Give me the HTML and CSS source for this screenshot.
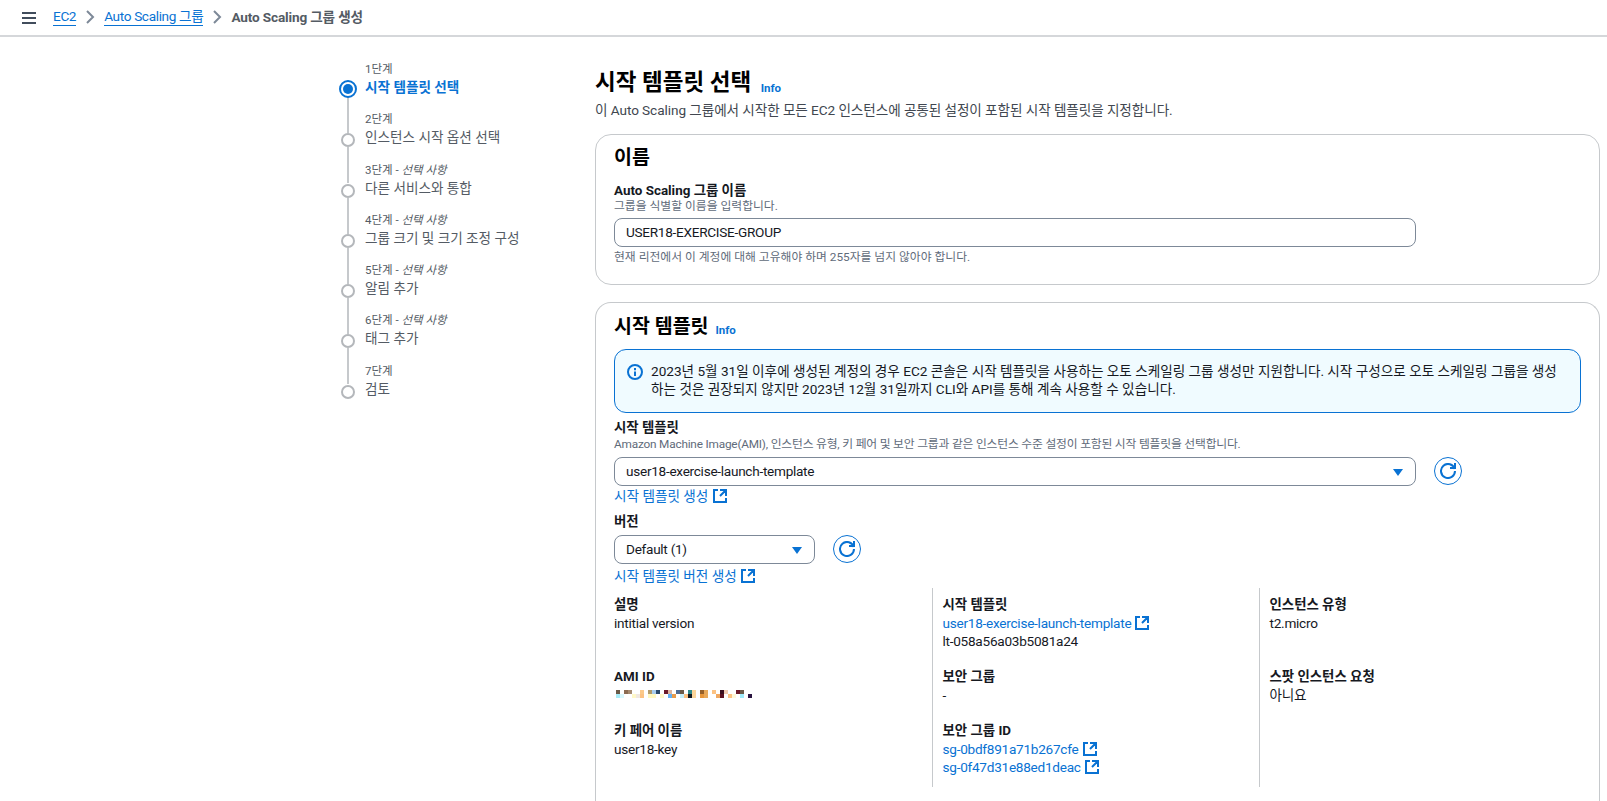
FILE: index.html
```html
<!DOCTYPE html>
<html lang="ko">
<head>
<meta charset="utf-8">
<title>Auto Scaling 그룹 생성</title>
<link rel="stylesheet" href="styles.css">
</head>
<body>
<svg class="sprite" width="0" height="0" aria-hidden="true">
  <symbol id="ext" viewBox="0 0 16 16"><path d="M14 8.01v-6H8M14.02 2 8 8.01M6 2.01H2v12h12v-3.99" fill="none" stroke="currentColor" stroke-width="2"/></symbol>
  <symbol id="refresh" viewBox="0 0 16 16"><path d="M10 5h5V0M15 8a7 7 0 1 1-.29-2" fill="none" stroke="currentColor" stroke-width="2"/></symbol>
</svg>
<header class="topbar">
  <svg class="menu" width="14" height="12" viewBox="0 0 14 12"><path d="M0 1h14M0 6h14M0 11h14" stroke="#414d5c" stroke-width="2"/></svg>
  <nav class="crumbs">
    <a class="crumb">EC2</a>
    <svg class="chev" width="9" height="14" viewBox="0 0 9 14"><path d="M1 1l6 6-6 6" fill="none" stroke="#7d8998" stroke-width="2"/></svg>
    <a class="crumb">Auto Scaling 그룹</a>
    <svg class="chev" width="9" height="14" viewBox="0 0 9 14"><path d="M1 1l6 6-6 6" fill="none" stroke="#7d8998" stroke-width="2"/></svg>
    <span class="crumb-current">Auto Scaling 그룹 생성</span>
  </nav>
</header>
<div class="layout">
  <ol class="steps">
    <li class="step active"><small>1단계</small><span class="marker"></span><b>시작 템플릿 선택</b></li>
    <li class="step"><small>2단계</small><span class="marker"></span><span>인스턴스 시작 옵션 선택</span></li>
    <li class="step"><small>3단계 - <i>선택 사항</i></small><span class="marker"></span><span>다른 서비스와 통합</span></li>
    <li class="step"><small>4단계 - <i>선택 사항</i></small><span class="marker"></span><span>그룹 크기 및 크기 조정 구성</span></li>
    <li class="step"><small>5단계 - <i>선택 사항</i></small><span class="marker"></span><span>알림 추가</span></li>
    <li class="step"><small>6단계 - <i>선택 사항</i></small><span class="marker"></span><span>태그 추가</span></li>
    <li class="step last"><small>7단계</small><span class="marker"></span><span>검토</span></li>
  </ol>
  <main class="content">
    <h1 class="page-title">시작 템플릿 선택 <a class="info">Info</a></h1>
    <p class="page-desc">이 Auto Scaling 그룹에서 시작한 모든 EC2 인스턴스에 공통된 설정이 포함된 시작 템플릿을 지정합니다.</p>
    <section class="card">
      <h2 class="card-title">이름</h2>
      <div class="label">Auto Scaling 그룹 이름</div>
      <div class="hint">그룹을 식별할 이름을 입력합니다.</div>
      <div class="field wide">USER18-EXERCISE-GROUP</div>
      <div class="hint after">현재 리전에서 이 계정에 대해 고유해야 하며 255자를 넘지 않아야 합니다.</div>
    </section>
    <section class="card open">
      <h2 class="card-title">시작 템플릿 <a class="info">Info</a></h2>
      <div class="alert">
        <svg class="alert-icon" width="16" height="16" viewBox="0 0 16 16"><circle cx="8" cy="8" r="7" fill="none" stroke="#0972d3" stroke-width="2"/><path d="M8 12V7.5M8 6.2V4" stroke="#0972d3" stroke-width="2"/></svg>
        <p>2023년 5월 31일 이후에 생성된 계정의 경우 EC2 콘솔은 시작 템플릿을 사용하는 오토 스케일링 그룹 생성만 지원합니다. 시작 구성으로 오토 스케일링 그룹을 생성<br>하는 것은 권장되지 않지만 2023년 12월 31일까지 CLI와 API를 통해 계속 사용할 수 있습니다.</p>
      </div>
      <div class="label">시작 템플릿</div>
      <div class="hint long">Amazon Machine Image(AMI), 인스턴스 유형, 키 페어 및 보안 그룹과 같은 인스턴스 수준 설정이 포함된 시작 템플릿을 선택합니다.</div>
      <div class="select-row">
        <div class="field wide select">user18-exercise-launch-template<span class="caret"></span></div>
        <button class="refresh"><svg width="16" height="16"><use href="#refresh"/></svg></button>
      </div>
      <a class="link-line">시작 템플릿 생성 <svg class="ext" width="16" height="16"><use href="#ext"/></svg></a>
      <div class="label version">버전</div>
      <div class="select-row version-row">
        <div class="field narrow select">Default (1)<span class="caret"></span></div>
        <button class="refresh"><svg width="16" height="16"><use href="#refresh"/></svg></button>
      </div>
      <a class="link-line">시작 템플릿 버전 생성 <svg class="ext" width="16" height="16"><use href="#ext"/></svg></a>
      <div class="details">
        <div class="col">
          <dl class="item tall"><dt>설명</dt><dd>intitial version</dd></dl>
          <dl class="item"><dt>AMI ID</dt><dd><svg class="mosaic" width="136" height="8" viewBox="0 0 34 2" shape-rendering="crispEdges">
            <rect x="0" y="0" width="1" height="1" fill="#6b5a48"/><rect x="2" y="0" width="1" height="1" fill="#8b6b52"/><rect x="3" y="0" width="1" height="1" fill="#a58a70"/><rect x="6" y="0" width="1" height="1" fill="#fbc98a"/><rect x="8" y="0" width="1" height="1" fill="#b09a6b"/><rect x="9" y="0" width="1" height="1" fill="#a8cdf0"/><rect x="10" y="0" width="1" height="1" fill="#2b4a6b"/><rect x="12" y="0" width="1" height="1" fill="#6b1a2a"/><rect x="13" y="0" width="1" height="1" fill="#dcb4a0"/><rect x="15" y="0" width="1" height="1" fill="#4f6a90"/><rect x="16" y="0" width="1" height="1" fill="#6b5a48"/><rect x="18" y="0" width="1" height="1" fill="#2f8a8a"/><rect x="19" y="0" width="1" height="1" fill="#fcd59a"/><rect x="21" y="0" width="1" height="1" fill="#96602a"/><rect x="22" y="0" width="1" height="1" fill="#e8a95a"/><rect x="24" y="0" width="1" height="1" fill="#fcc282"/><rect x="26" y="0" width="1" height="1" fill="#3a0f1f"/><rect x="27" y="0" width="1" height="1" fill="#f0c8b0"/><rect x="30" y="0" width="1" height="1" fill="#6b1a2a"/><rect x="31" y="0" width="1" height="1" fill="#6b5a48"/>
            <rect x="0" y="1" width="1" height="1" fill="#a8ecf8"/><rect x="1" y="1" width="1" height="1" fill="#d8f8ff"/><rect x="4" y="1" width="1" height="1" fill="#fff8c8"/><rect x="5" y="1" width="1" height="1" fill="#f0e8e0"/><rect x="6" y="1" width="1" height="1" fill="#fcc282"/><rect x="8" y="1" width="2" height="1" fill="#fff8c0"/><rect x="11" y="1" width="1" height="1" fill="#fff8c8"/><rect x="13" y="1" width="1" height="1" fill="#62b0f5"/><rect x="14" y="1" width="1" height="1" fill="#e89a4a"/><rect x="16" y="1" width="1" height="1" fill="#c8f0fa"/><rect x="17" y="1" width="1" height="1" fill="#fcc282"/><rect x="18" y="1" width="1" height="1" fill="#101820"/><rect x="19" y="1" width="1" height="1" fill="#fcd59a"/><rect x="21" y="1" width="1" height="1" fill="#e8963a"/><rect x="22" y="1" width="1" height="1" fill="#e8a95a"/><rect x="25" y="1" width="1" height="1" fill="#f0a860"/><rect x="26" y="1" width="1" height="1" fill="#5a1020"/><rect x="28" y="1" width="1" height="1" fill="#fcc282"/><rect x="29" y="1" width="1" height="1" fill="#fff8d8"/><rect x="31" y="1" width="1" height="1" fill="#a0ecfa"/><rect x="33" y="1" width="1" height="1" fill="#2a1440"/>
          </svg></dd></dl>
          <dl class="item"><dt>키 페어 이름</dt><dd>user18-key</dd></dl>
        </div>
        <div class="col">
          <dl class="item tall"><dt>시작 템플릿</dt><dd><a>user18-exercise-launch-template <svg class="ext" width="16" height="16"><use href="#ext"/></svg></a></dd><dd>lt-058a56a03b5081a24</dd></dl>
          <dl class="item"><dt>보안 그룹</dt><dd>-</dd></dl>
          <dl class="item"><dt>보안 그룹 ID</dt><dd><a>sg-0bdf891a71b267cfe <svg class="ext" width="16" height="16"><use href="#ext"/></svg></a></dd><dd><a>sg-0f47d31e88ed1deac <svg class="ext" width="16" height="16"><use href="#ext"/></svg></a></dd></dl>
        </div>
        <div class="col">
          <dl class="item tall"><dt>인스턴스 유형</dt><dd>t2.micro</dd></dl>
          <dl class="item"><dt>스팟 인스턴스 요청</dt><dd>아니요</dd></dl>
        </div>
      </div>
    </section>
  </main>
</div>
</body>
</html>
```
FILE: styles.css
```css
* { box-sizing: border-box; }
html, body { margin: 0; height: 801px; overflow: hidden; background: #fff; }
body { font-family: Roboto, "Noto Sans CJK KR", sans-serif; font-size: 13.6px; line-height: 18px; color: #16191f; }
.sprite { position: absolute; }
a { color: #0972d3; }
.topbar { height: 37px; border-bottom: 2px solid #d5d7da; display: flex; align-items: center; padding: 0 0 2px 22px; }
.menu { margin-right: 17px; margin-top: 2px; }
.crumbs { display: flex; align-items: center; gap: 9.5px; font-size: 13.6px; }
.crumb { color: #0972d3; border-bottom: 1px solid #0972d3; line-height: 17px; letter-spacing: -0.35px; }
.crumb-current { font-weight: 700; color: #545b64; letter-spacing: -0.15px; }
.layout { display: flex; padding: 24px 7px 0 341px; }
.steps { list-style: none; margin: 0; padding: 0; width: 254px; flex: none; }
.step { position: relative; height: 50.3px; padding-left: 24px; color: #545b64; display: flex; flex-direction: column; }
.step small { font-size: 11.5px; line-height: 16px; }
.step > span:last-child, .step > b { line-height: 21px; font-size: 13.6px; }
.step.active > b { color: #0972d3; font-weight: 700; }
.marker { position: absolute; left: 0; top: 22px; width: 14px; height: 14px; border: 2px solid #b4b7bb; border-radius: 50%; background: #fff; z-index: 1; }
.step.active .marker { left: -2px; top: 19px; width: 18px; height: 18px; border-color: #0972d3; }
.step.active .marker::after { content: ""; position: absolute; inset: 2px; background: #0972d3; border-radius: 50%; }
.step::before { content: ""; position: absolute; left: 6px; top: 36px; height: 36px; width: 2px; background: #c6c9cc; }
.step.last::before { display: none; }
.content { flex: 1; min-width: 0; }
.page-title { margin: 0; padding-top: 8px; font-size: 22.5px; line-height: 26px; font-weight: 700; color: #000; }
.info { font-size: 11.5px; font-weight: 700; vertical-align: -2px; margin-left: 2px; }
.page-title .info { margin-left: 4px; }
.page-desc { margin: 0 0 15px; color: #414750; letter-spacing: -0.07px; }
.card { border: 1px solid #c6c9cc; border-radius: 16px; padding: 10px 18px 20px; margin-bottom: 17px; }
.card.open { border-bottom: none; border-radius: 16px 16px 0 0; height: 499px; margin-bottom: 0; padding: 11px 18px 0; }
.card-title { margin: 0 0 12px; font-size: 19.5px; line-height: 26px; font-weight: 700; color: #000; }
.card-title .info { vertical-align: -1px; }
.card.open .card-title { margin-bottom: 6px; }
.label { font-weight: 700; font-size: 13.4px; line-height: 16px; color: #16191f; }
.hint { font-size: 11.8px; line-height: 14px; color: #5f6b7a; }
.hint.long { letter-spacing: -0.19px; margin-top: 1px; }
.hint.after { margin-top: 3px; }
.field { border: 1px solid #7d8998; border-radius: 8px; height: 29px; line-height: 27px; padding: 0 11px; margin-top: 5px; background: #fff; font-size: 13.6px; letter-spacing: -0.28px; }
.wide { width: 802px; }
.narrow { width: 201px; }
.select { position: relative; margin-top: 0; }
.caret { position: absolute; right: 12px; top: 11px; border: 5px solid transparent; border-top: 7px solid #0972d3; border-bottom: 0; }
.select-row { display: flex; align-items: center; gap: 18px; margin-top: 5.5px; }
.version-row { margin-top: 5px; }
.refresh { width: 28px; height: 28px; border: 1px solid #0972d3; border-radius: 50%; background: #fff; color: #0972d3; padding: 0; display: flex; align-items: center; justify-content: center; }
.alert { display: flex; gap: 8px; border: 1px solid #0972d3; border-radius: 12px; background: #f0fbff; padding: 12px; margin-bottom: 7px; width: 967px; height: 64px; }
.alert p { margin: 0; font-size: 13.6px; line-height: 18px; white-space: nowrap; }
.alert-icon { flex: none; margin-top: 2px; }
.link-line { display: block; line-height: 20px; }
.version-row + .link-line { margin-top: 2px; }
.ext { vertical-align: -3px; color: #0972d3; }
.version { margin-top: 8px; }
.details { display: grid; grid-template-columns: 318px 327px 1fr; margin-top: 2px; height: 199px; }
.col + .col { border-left: 1px solid #c6c9cc; padding-left: 9.5px; }
.item { margin: 0; padding-top: 8px; height: 54px; }
.item.tall { height: 72px; }
dt { font-weight: 700; font-size: 13.4px; line-height: 18px; }
dd { margin: 0; font-size: 13.6px; line-height: 18.5px; letter-spacing: -0.26px; }
.mosaic { display: block; margin: 4px 0 0 2px; }
```
